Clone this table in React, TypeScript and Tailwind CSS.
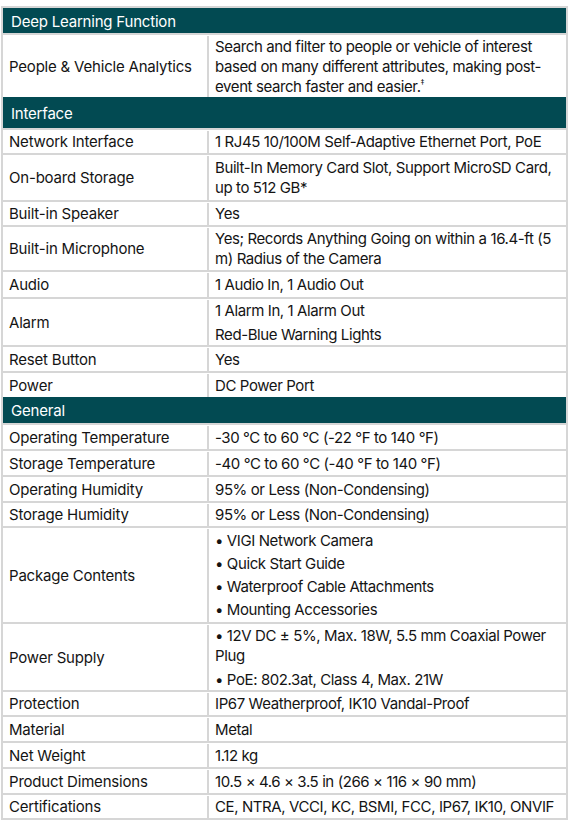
import React from 'react'

type Row = { label: string; value: React.ReactNode; h?: string }

function Section({ title, h }: { title: string; h: string }) {
  return (
    <div className={`flex items-center bg-[#024a52] px-[8px] pt-[2px] text-[15px] text-white ${h}`}>
      {title}
    </div>
  )
}

function SpecRow({ label, value, h }: Row) {
  return (
    <div className={`flex border-t-2 border-[#d6d6d6] pt-[1px] ${h ?? 'h-[26px]'}`}>
      <div className="flex w-[204px] shrink-0 items-center px-[6px]">{label}</div>
      <div className="flex flex-1 flex-col justify-center border-l-2 border-[#d6d6d6] pr-[2px] pl-[6px] tracking-[-0.4px]">
        {value}
      </div>
    </div>
  )
}

function Lines({ items, gap }: { items: string[]; gap: string }) {
  return (
    <div className={`flex flex-col ${gap}`}>
      {items.map((t) => (
        <div key={t}>{t}</div>
      ))}
    </div>
  )
}

export default function App() {
  return (
    <div className="h-[828px] w-[570px] bg-white pt-[6px] pl-[1px]">
      <div
        className="w-[567px] border-2 border-[#d6d6d6] text-[15px] leading-[20px] tracking-[-0.2px] text-[#141414]"
        style={{ fontFamily: 'Inter, "Liberation Sans", sans-serif' }}
      >
        <Section title="Deep Learning Function" h="h-[25px]" />
        <SpecRow
          label="People & Vehicle Analytics"
          h="h-[64px]"
          value={
            <span>
              Search and filter to people or vehicle of interest based on many different
              attributes, making post-event search faster and easier.
              <span className="inline-block align-top text-[8px] leading-[10px]">‡</span>
            </span>
          }
        />
        <Section title="Interface" h="h-[31px]" />
        <SpecRow label="Network Interface" h="h-[25px]" value="1 RJ45 10/100M Self-Adaptive Ethernet Port, PoE" />
        <SpecRow
          label="On-board Storage"
          h="h-[47px]"
          value="Built-In Memory Card Slot, Support MicroSD Card, up to 512 GB*"
        />
        <SpecRow label="Built-in Speaker" h="h-[25px]" value="Yes" />
        <SpecRow
          label="Built-in Microphone"
          h="h-[45px]"
          value="Yes; Records Anything Going on within a 16.4-ft (5 m) Radius of the Camera"
        />
        <SpecRow label="Audio" h="h-[27px]" value="1 Audio In, 1 Audio Out" />
        <SpecRow
          label="Alarm"
          h="h-[48px]"
          value={<Lines items={['1 Alarm In, 1 Alarm Out', 'Red-Blue Warning Lights']} gap="gap-[4px]" />}
        />
        <SpecRow label="Reset Button" value="Yes" />
        <SpecRow label="Power" value="DC Power Port" />
        <Section title="General" h="h-[26px]" />
        <SpecRow label="Operating Temperature" value="-30 °C to 60 °C (-22 °F to 140 °F)" />
        <SpecRow label="Storage Temperature" value="-40 °C to 60 °C (-40 °F to 140 °F)" />
        <SpecRow label="Operating Humidity" value="95% or Less (Non-Condensing)" />
        <SpecRow label="Storage Humidity" h="h-[25px]" value="95% or Less (Non-Condensing)" />
        <SpecRow
          label="Package Contents"
          h="h-[96px]"
          value={
            <Lines
              items={[
                '• VIGI Network Camera',
                '• Quick Start Guide',
                '• Waterproof Cable Attachments',
                '• Mounting Accessories',
              ]}
              gap="gap-[3px]"
            />
          }
        />
        <SpecRow
          label="Power Supply"
          h="h-[68px]"
          value={
            <div className="flex flex-col gap-[4px]">
              <div>• 12V DC ± 5%, Max. 18W, 5.5 mm Coaxial Power Plug</div>
              <div>• PoE: 802.3at, Class 4, Max. 21W</div>
            </div>
          }
        />
        <SpecRow label="Protection" h="h-[25px]" value="IP67 Weatherproof, IK10 Vandal-Proof" />
        <SpecRow label="Material" value="Metal" />
        <SpecRow label="Net Weight" value="1.12 kg" />
        <SpecRow label="Product Dimensions" value="10.5 × 4.6 × 3.5 in (266 × 116 × 90 mm)" />
        <SpecRow
          label="Certifications"
          h="h-[25px]"
          value={<span className="whitespace-nowrap">CE, NTRA, VCCI, KC, BSMI, FCC, IP67, IK10, ONVIF</span>}
        />
      </div>
    </div>
  )
}
